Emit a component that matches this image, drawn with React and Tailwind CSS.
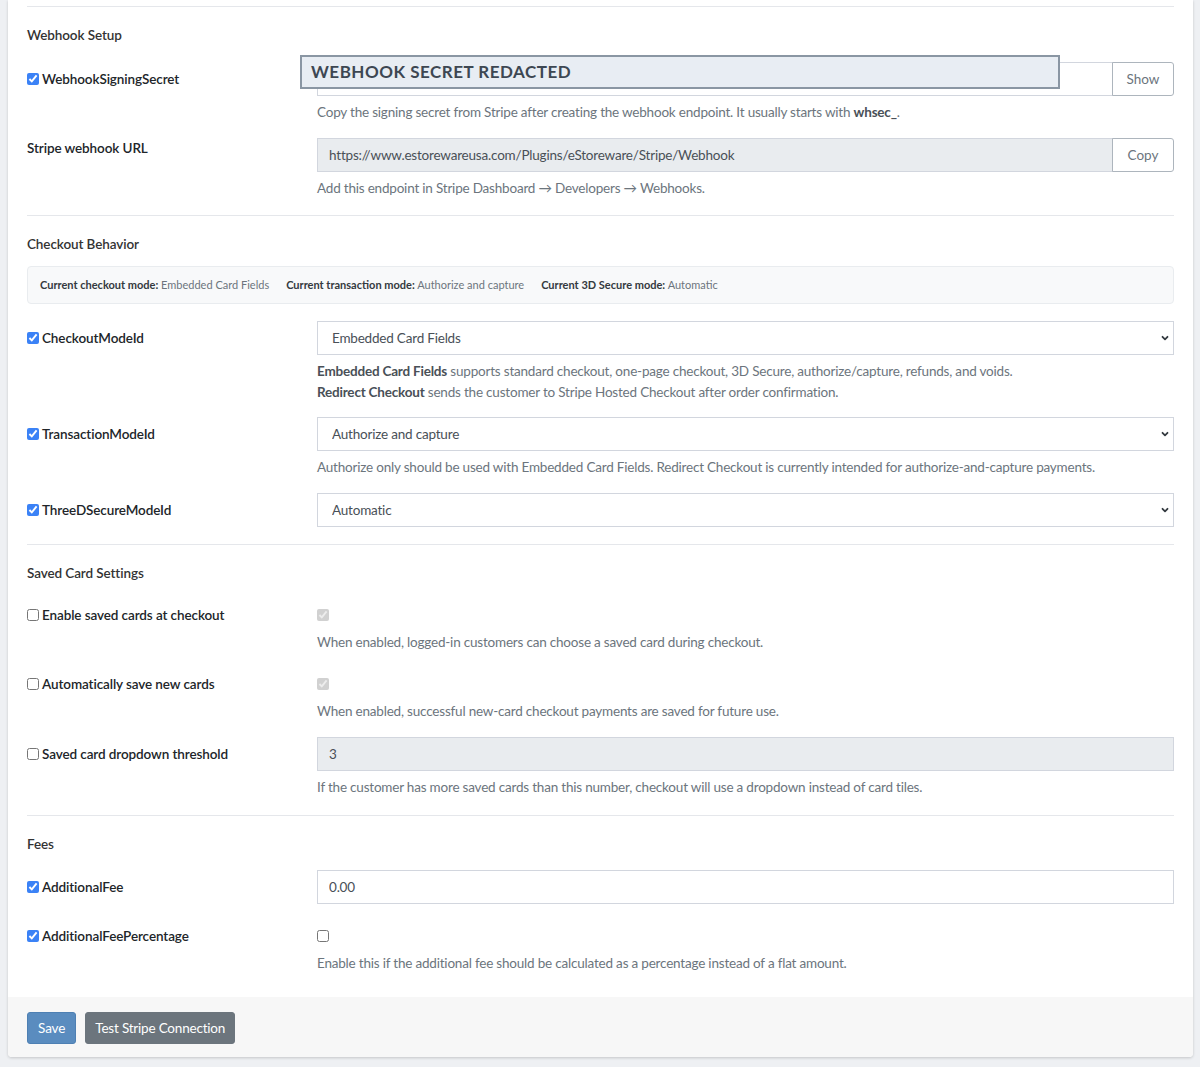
import { useState } from "react";

function Hint({ children, tight }) {
  return (
    <p className={`${tight ? "mt-0" : "mt-[6px]"} text-[13.5px] leading-[21px] tracking-[-0.2px] text-[#6c757d]`}>
      {children}
    </p>
  );
}

function FieldLabel({ label, checked, plain }) {
  return (
    <div
      className={`flex gap-[3px] text-[13.5px] font-semibold tracking-[-0.1px] text-[#212529] ${
        plain ? "h-[21px] items-center" : "h-[34px] items-center"
      }`}
    >
      {!plain && (
        <input
          type="checkbox"
          defaultChecked={checked}
          className="m-0 h-[12px] w-[12px] accent-[#3b82f6]"
        />
      )}
      <span>{label}</span>
    </div>
  );
}

function Row({ label, checked, plain, children, className = "" }) {
  return (
    <div className={`grid grid-cols-[290px_1fr] ${className}`}>
      <FieldLabel label={label} checked={checked} plain={plain} />
      <div>{children}</div>
    </div>
  );
}

function TextInput({ value, disabled }) {
  return (
    <input
      type="text"
      defaultValue={value}
      disabled={disabled}
      className={`block h-[34px] w-full border border-[#d2d6de] px-[11px] text-[13.5px] tracking-[-0.2px] text-[#495057] outline-none ${
        disabled ? "bg-[#e9ecef]" : "bg-white"
      }`}
    />
  );
}

function SelectInput({ value, options }) {
  return (
    <div className="relative">
      <select
        defaultValue={value}
        className="block h-[34px] w-full appearance-none border border-[#d2d6de] bg-white pl-[14px] pr-8 text-[13.5px] tracking-[-0.2px] text-[#495057] outline-none"
      >
        {options.map((o) => (
          <option key={o}>{o}</option>
        ))}
      </select>
      <svg
        className="pointer-events-none absolute right-[4px] top-1/2 h-[10px] w-[10px] -translate-y-1/2"
        viewBox="0 0 10 10"
        fill="none"
        stroke="#343a40"
        strokeWidth="1.8"
        strokeLinecap="round"
        strokeLinejoin="round"
      >
        <path d="M2.5 3.8 5 6.3 7.5 3.8" />
      </svg>
    </div>
  );
}

function Section({ title, children, last }) {
  return (
    <div className={last ? "" : "border-b border-[#e5e7eb]"}>
      <h3 className="pt-[18px] text-[13.5px] font-semibold leading-[21px] tracking-[-0.1px] text-[#333]">{title}</h3>
      {children}
    </div>
  );
}

function InputGroup({ value, button, disabled }) {
  return (
    <div className="flex">
      <TextInput value={value} disabled={disabled} />
      <button className="-ml-px h-[34px] w-[62px] shrink-0 rounded-r-[3px] border border-[#adb5bd] bg-white text-[13.5px] text-[#6c757d]">
        {button}
      </button>
    </div>
  );
}

function CheckControl({ checked, disabled }) {
  return (
    <div className="flex h-[34px] items-center">
      <input type="checkbox" defaultChecked={checked} disabled={disabled} className="m-0 h-[12px] w-[12px]" />
    </div>
  );
}

export default function App() {
  const [showSecret, setShowSecret] = useState(false);

  return (
    <div className="min-h-screen bg-[#eef0f3] pl-[8px] pr-[7px] font-['Lato','Noto_Sans',sans-serif]">
      <div className="overflow-hidden rounded-b-[4px] bg-white shadow-[0_1px_3px_rgba(0,0,0,0.18)]">
        <div className="px-[19px]">
          <div className="h-[7px] border-b border-[#e5e7eb]" />

          <Section title="Webhook Setup">
            <Row label="WebhookSigningSecret" checked className="mt-[16px]">
              <div className="relative">
                <InputGroup value="" button={showSecret ? "Hide" : "Show"} />
                <div className="absolute left-[-17px] top-[-7px] flex h-[34px] w-[760px] items-center border-2 border-[#8a96a3] bg-[#e8edf3] px-[9px] text-[17px] font-bold tracking-[0.5px] text-[#3d4752]">
                  WEBHOOK SECRET REDACTED
                </div>
              </div>
              <Hint>
                Copy the signing secret from Stripe after creating the webhook endpoint. It usually starts with{" "}
                <b className="font-bold text-[#495057]">whsec_</b>.
              </Hint>
            </Row>
            <Row label="Stripe webhook URL" plain className="mt-[15px] pb-[16px]">
              <InputGroup value="https://www.estorewareusa.com/Plugins/eStoreware/Stripe/Webhook" button="Copy" disabled />
              <Hint>Add this endpoint in Stripe Dashboard → Developers → Webhooks.</Hint>
            </Row>
          </Section>

          <Section title="Checkout Behavior">
            <div className="mt-[11px] flex h-[38px] items-center gap-[17px] rounded-[4px] border border-[#e9ecef] bg-[#f8f9fa] px-[12px] text-[11px] text-[#6c757d]">
              <span>
                <b className="font-bold text-[#343a40]">Current checkout mode:</b> Embedded Card Fields
              </span>
              <span>
                <b className="font-bold text-[#343a40]">Current transaction mode:</b> Authorize and capture
              </span>
              <span>
                <b className="font-bold text-[#343a40]">Current 3D Secure mode:</b> Automatic
              </span>
            </div>
            <Row label="CheckoutModeId" checked className="mt-[17px]">
              <SelectInput value="Embedded Card Fields" options={["Embedded Card Fields", "Redirect Checkout"]} />
              <Hint>
                <b className="font-bold text-[#495057]">Embedded Card Fields</b> supports standard checkout, one-page checkout, 3D Secure, authorize/capture, refunds, and voids.
                <br />
                <b className="font-bold text-[#495057]">Redirect Checkout</b> sends the customer to Stripe Hosted Checkout after order confirmation.
              </Hint>
            </Row>
            <Row label="TransactionModeId" checked className="mt-[14px]">
              <SelectInput value="Authorize and capture" options={["Authorize only", "Authorize and capture"]} />
              <Hint>
                Authorize only should be used with Embedded Card Fields. Redirect Checkout is currently intended for authorize-and-capture payments.
              </Hint>
            </Row>
            <Row label="ThreeDSecureModeId" checked className="mt-[15px] pb-[17px]">
              <SelectInput value="Automatic" options={["Automatic", "Always"]} />
            </Row>
          </Section>

          <Section title="Saved Card Settings">
            <Row label="Enable saved cards at checkout" className="mt-[14px]">
              <CheckControl checked disabled />
              <Hint tight>When enabled, logged-in customers can choose a saved card during checkout.</Hint>
            </Row>
            <Row label="Automatically save new cards" className="mt-[14px]">
              <CheckControl checked disabled />
              <Hint tight>When enabled, successful new-card checkout payments are saved for future use.</Hint>
            </Row>
            <Row label="Saved card dropdown threshold" className="mt-[15px] pb-[17px]">
              <TextInput value="3" disabled />
              <Hint>
                If the customer has more saved cards than this number, checkout will use a dropdown instead of card tiles.
              </Hint>
            </Row>
          </Section>

          <Section title="Fees" last>
            <Row label="AdditionalFee" checked className="mt-[15px]">
              <TextInput value="0.00" />
            </Row>
            <Row label="AdditionalFeePercentage" checked className="mt-[15px] pb-[23px]">
              <CheckControl />
              <Hint tight>Enable this if the additional fee should be calculated as a percentage instead of a flat amount.</Hint>
            </Row>
          </Section>
        </div>

        <div className="flex gap-[9px] bg-[#f7f7f7] px-[19px] pb-[13px] pt-[15px]">
          <button className="h-[32px] rounded-[3px] border border-[#4e80b3] bg-[#5a8cbf] px-[10px] text-[13.5px] tracking-[-0.1px] text-white">
            Save
          </button>
          <button
            onClick={() => setShowSecret((s) => !s)}
            className="h-[32px] rounded-[3px] border border-[#6c757d] bg-[#6c757d] px-[9px] text-[13.5px] tracking-[-0.2px] text-white"
          >
            Test Stripe Connection
          </button>
        </div>
      </div>
    </div>
  );
}
